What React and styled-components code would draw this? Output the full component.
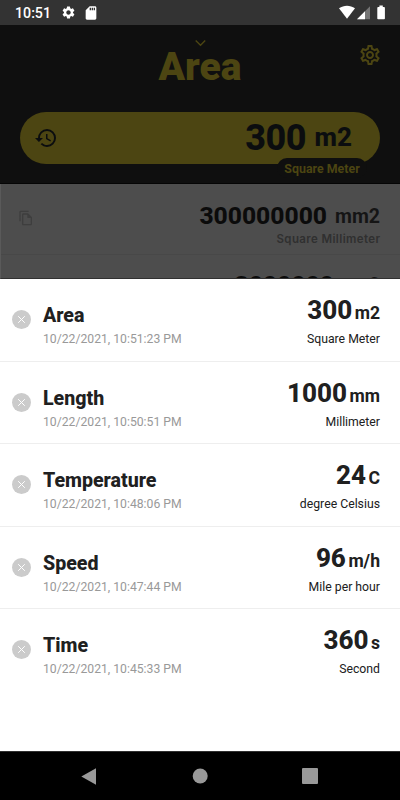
import React from 'react'
import styled, { createGlobalStyle } from 'styled-components'
import { MdSettings, MdSdCard, MdOutlineSettings, MdHistory, MdOutlineFileCopy } from 'react-icons/md'

const GlobalStyle = createGlobalStyle`
    * {
        box-sizing: border-box;
    }
    body {
        margin: 0;
        font-family: Roboto, sans-serif;
        color: #202020;
    }
`

const Screen = styled.div`
    width: 400px;
    height: 800px;
    display: flex;
    flex-direction: column;
    overflow: hidden;
    background: white;
`

const StatusBar = styled.div`
    height: 25px;
    flex: none;
    background: #333333;
    color: white;
    display: flex;
    align-items: center;
    justify-content: space-between;
    padding: 0 14px 0 15px;
`

const StatusGroup = styled.div`
    display: flex;
    align-items: center;
    gap: 7px;
    height: 25px;
`

const Clock = styled.span`
    font-size: 14.2px;
    font-weight: 500;
    line-height: 26px;
    width: 39px;
`

const Header = styled.header`
    height: 159px;
    flex: none;
    background: #0f0f0f;
    border-bottom: 1px solid #050505;
    color: #4c4512;
    padding: 0 20px;
`

const TitleBar = styled.div`
    height: 87px;
    display: grid;
    grid-template-columns: 22px 1fr 22px;
    .settings {
        margin-top: 18px;
        justify-self: end;
        margin-right: -2px;
    }
`

const TitleBlock = styled.div`
    grid-column: 2;
    display: flex;
    flex-direction: column;
    align-items: center;
    padding-top: 14px;
`

const Title = styled.h1`
    margin: -4px 0 0;
    font-size: 39px;
    font-weight: 900;
    line-height: 48px;
`

const InputPill = styled.div`
    height: 52px;
    border-radius: 26px;
    background: #4c4512;
    color: #0b0d0f;
    display: flex;
    align-items: center;
    padding: 0 28px 0 14px;
`

const PillValue = styled.span`
    margin-left: auto;
    font-size: 36px;
    font-weight: 800;
    line-height: 52px;
    letter-spacing: -0.5px;
    margin-right: 8.5px;
`

const PillUnit = styled.span`
    font-size: 26px;
    font-weight: 800;
    line-height: 48px;
    padding-bottom: 2px;
`

const UnitName = styled.div`
    width: 90px;
    height: 20px;
    margin: -6px 13px 0 auto;
    border-radius: 10px;
    background: #0f0f0f;
    font-size: 12.4px;
    font-weight: 700;
    line-height: 21px;
    text-align: center;
    position: relative;
`

const Results = styled.div`
    height: 95px;
    flex: none;
    overflow: hidden;
    background: #4d4d4d;
    border-left: 1px solid #5a5a5a;
    border-bottom: 1px solid #303030;
    color: #0b0b0b;
`

const ResultRow = styled.div`
    height: ${props => props.$cut ? '24px' : '71px'};
    display: flex;
    justify-content: space-between;
    border-bottom: ${props => props.$cut ? 'none' : '1px solid #484848'};
    padding: ${props => props.$cut ? '15px' : '17px'} 20px 0 17px;
    svg {
        color: #3e3e3e;
        margin-top: 9px;
    }
`

const ResultText = styled.div`
    text-align: right;
`

const ResultValue = styled.div`
    font-size: 24.6px;
    font-weight: 800;
    line-height: 29px;
    display: flex;
    justify-content: flex-end;
    gap: 8px;
    span {
        color: #151515;
        font-size: 19.5px;
        font-weight: 700;
        line-height: 31px;
    }
`

const ResultName = styled.div`
    color: #303030;
    font-family: Inter, sans-serif;
    font-size: 11.5px;
    font-weight: 600;
    line-height: 16px;
    letter-spacing: 0.38px;
    margin-top: -1px;
    margin-right: -0.4px;
`

const HistorySheet = styled.main`
    flex: 1;
    background: white;
`

const HistoryRow = styled.div`
    height: 82.5px;
    display: flex;
    justify-content: space-between;
    padding: 0 20px 0 12px;
    border-bottom: ${props => props.$last ? 'none' : '1px solid #eeeeee'};
`

const HistoryLeft = styled.div`
    display: flex;
    gap: 12px;
`

const RemoveButton = styled.button`
    width: 19px;
    height: 19px;
    margin: 31px 0 0;
    padding: 0;
    border: none;
    border-radius: 50%;
    background: #cbcbcb;
    display: flex;
    align-items: center;
    justify-content: center;
`

const Category = styled.div`
    font-size: 19.6px;
    font-weight: 800;
    line-height: 24px;
    margin-top: 25px;
`

const DateText = styled.div`
    font-size: 12.2px;
    line-height: 16px;
    color: #999999;
    margin-top: 3.4px;
`

const HistoryRight = styled.div`
    text-align: right;
`

const Value = styled.div`
    font-size: 26px;
    font-weight: 800;
    line-height: 28px;
    margin-top: 17px;
    span {
        font-size: 17.6px;
        font-weight: 700;
        margin-left: 2.5px;
    }
`

const FullUnit = styled.div`
    font-size: 12.25px;
    line-height: 16px;
    margin-top: 4.4px;
`

const NavBar = styled.nav`
    height: 49px;
    flex: none;
    background: black;
    border-top: 1px solid #303030;
    display: flex;
    align-items: center;
    justify-content: space-between;
    padding: 0 82px 0 81px;
`

const history = [
    { category: 'Area', date: '10/22/2021, 10:51:23 PM', value: '300', unit: 'm2', name: 'Square Meter' },
    { category: 'Length', date: '10/22/2021, 10:50:51 PM', value: '1000', unit: 'mm', name: 'Millimeter' },
    { category: 'Temperature', date: '10/22/2021, 10:48:06 PM', value: '24', unit: 'C', name: 'degree Celsius' },
    { category: 'Speed', date: '10/22/2021, 10:47:44 PM', value: '96', unit: 'm/h', name: 'Mile per hour' },
    { category: 'Time', date: '10/22/2021, 10:45:33 PM', value: '360', unit: 's', name: 'Second' },
]

const SignalIcons = () => (
    <svg width="48" height="16" viewBox="0 0 48 16">
        <path d="M1 3.2C5.8 -.2 12.2 -.2 17 3.2L9 13.8Z" fill="white" />
        <path d="M32 1.2V14.2H19Z" fill="#757575" />
        <path d="M27 6.2V14.2H19Z" fill="white" />
        <path d="M41.4 .5h3.4v1.6h1.3q.8 0 .8 .8v10.6q0 .8-.8 .8h-6q-.8 0-.8-.8V2.9q0-.8 .8-.8h1.3z" fill="white" />
    </svg>
)

export default function App() {
    return (
        <Screen>
            <GlobalStyle />
            <StatusBar>
                <StatusGroup>
                    <Clock>10:51</Clock>
                    <MdSettings size={15} />
                    <MdSdCard size={16} />
                </StatusGroup>
                <SignalIcons />
            </StatusBar>

            <Header>
                <TitleBar>
                    <TitleBlock>
                        <svg width="12" height="8" viewBox="0 0 12 8" fill="none" stroke="currentColor" strokeWidth="1.4">
                            <path d="M1.7 1.5 6.5 6.2l4.7-4.7" />
                        </svg>
                        <Title>Area</Title>
                    </TitleBlock>
                    <MdOutlineSettings className='settings' size={24} />
                </TitleBar>
                <InputPill>
                    <MdHistory size={24} />
                    <PillValue>300</PillValue>
                    <PillUnit>m2</PillUnit>
                </InputPill>
                <UnitName>Square Meter</UnitName>
            </Header>

            <Results>
                <ResultRow>
                    <MdOutlineFileCopy size={16} />
                    <ResultText>
                        <ResultValue>300000000<span>mm2</span></ResultValue>
                        <ResultName>Square Millimeter</ResultName>
                    </ResultText>
                </ResultRow>
                {/* only the top of this row shows above the sheet */}
                <ResultRow $cut>
                    <span />
                    <ResultText>
                        <ResultValue>3000000<span>cm2</span></ResultValue>
                    </ResultText>
                </ResultRow>
            </Results>

            <HistorySheet>
                {history.map((item, i) => (
                    <HistoryRow key={item.category} $last={i === history.length - 1}>
                        <HistoryLeft>
                            <RemoveButton>
                                <svg width="9" height="9" viewBox="0 0 9 9" stroke="white" strokeWidth="1">
                                    <path d="M1.2 1.2l6.6 6.6M7.8 1.2L1.2 7.8" />
                                </svg>
                            </RemoveButton>
                            <div>
                                <Category>{item.category}</Category>
                                <DateText>{item.date}</DateText>
                            </div>
                        </HistoryLeft>
                        <HistoryRight>
                            <Value>{item.value}<span>{item.unit}</span></Value>
                            <FullUnit>{item.name}</FullUnit>
                        </HistoryRight>
                    </HistoryRow>
                ))}
            </HistorySheet>

            <NavBar>
                <svg width="17" height="17" viewBox="0 0 17 17"><path d="M15 .3v16.4L.3 8.5Z" fill="#999999" /></svg>
                <svg width="16" height="16" viewBox="0 0 16 16"><circle cx="8.2" cy="8" r="7.5" fill="#999999" /></svg>
                <svg width="16" height="16" viewBox="0 0 16 16"><rect width="16" height="16" rx="1" fill="#999999" /></svg>
            </NavBar>
        </Screen>
    )
}
